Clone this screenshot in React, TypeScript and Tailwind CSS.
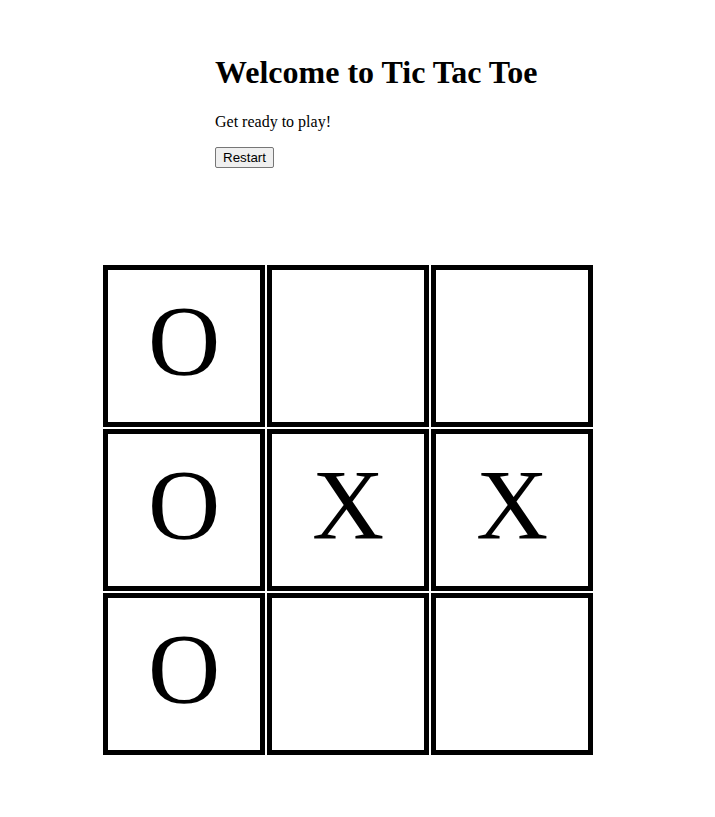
import React from "react";

const board: string[] = ["O", "", "", "O", "X", "X", "O", "", ""];

export default function App() {
  return (
    <div className="min-h-[817px] bg-white text-black" style={{ fontFamily: '"Liberation Serif", "Times New Roman", serif' }}>
      <div className="pl-[215px] pt-[54px]">
        <h1 className="text-[32px] font-bold leading-[37px] m-0">Welcome to Tic Tac Toe</h1>
        <p className="text-[16px] leading-[18px] mt-[22px]">Get ready to play!</p>
        <button
          className="mt-[16px] h-[21px] px-[7px] text-[13.33px] leading-[15px] bg-[#efefef] border border-[#767676] rounded-[2px] text-black"
          style={{ fontFamily: '"Liberation Sans", Arial, sans-serif' }}
        >
          Restart
        </button>
      </div>
      <div className="ml-[103px] mt-[96px] grid grid-cols-[repeat(3,162px)] grid-rows-[repeat(3,162px)] gap-[2px] w-[490px]">
        {board.map((v, i) => (
          <div key={i} className="border-[5px] border-black flex items-center justify-center pb-[10px] text-[100px] leading-none">
            {v}
          </div>
        ))}
      </div>
    </div>
  );
}
